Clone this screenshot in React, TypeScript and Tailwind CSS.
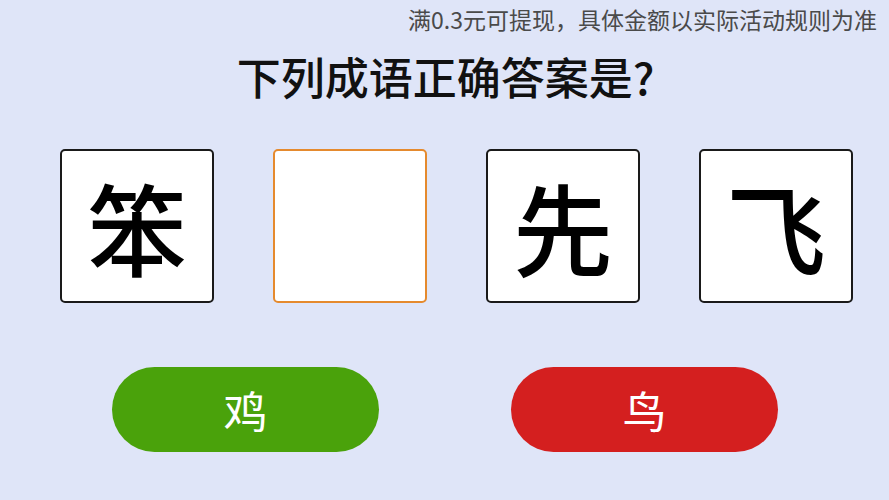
import React from "react";

const cjk = "font-['Noto_Sans_CJK_SC','Noto_Sans',sans-serif]";

const cards = ["笨", "", "先", "飞"];

export default function App() {
  return (
    <div className={`w-[889px] h-[500px] bg-[#dfe5f8] overflow-hidden ${cjk}`}>
      {/* 提示 */}
      <div className="flex justify-end pr-[12px] pt-[3px] text-[23px] leading-[32px] text-[#4a4a4a]">
        满0.3元可提现，具体金额以实际活动规则为准
      </div>

      {/* 题目 */}
      <h1 className="mt-[15px] text-center text-[44px] leading-[52px] font-medium text-[#111] pl-[2px]">
        下列成语正确答案是?
      </h1>

      {/* 成语格子 */}
      <div className="flex gap-[59px] pl-[60px] mt-[47px]">
        {cards.map((c, i) => (
          <div
            key={i}
            className={`w-[154px] h-[154px] rounded-[5px] bg-white border-2 flex items-center justify-center text-[100px] font-medium leading-none text-black ${
              c ? "border-[#1a1a1a]" : "border-[#e58a2e]"
            }`}
          >
            {c}
          </div>
        ))}
      </div>

      {/* 选项按钮 */}
      <div className="flex gap-[132px] pl-[112px] mt-[64px]">
        <button className="w-[267px] h-[85px] rounded-full bg-[#4aa20b] text-white text-[44px] leading-none flex items-center justify-center">
          鸡
        </button>
        <button className="w-[267px] h-[85px] rounded-full bg-[#d41f1f] text-white text-[44px] leading-none flex items-center justify-center">
          鸟
        </button>
      </div>
    </div>
  );
}
